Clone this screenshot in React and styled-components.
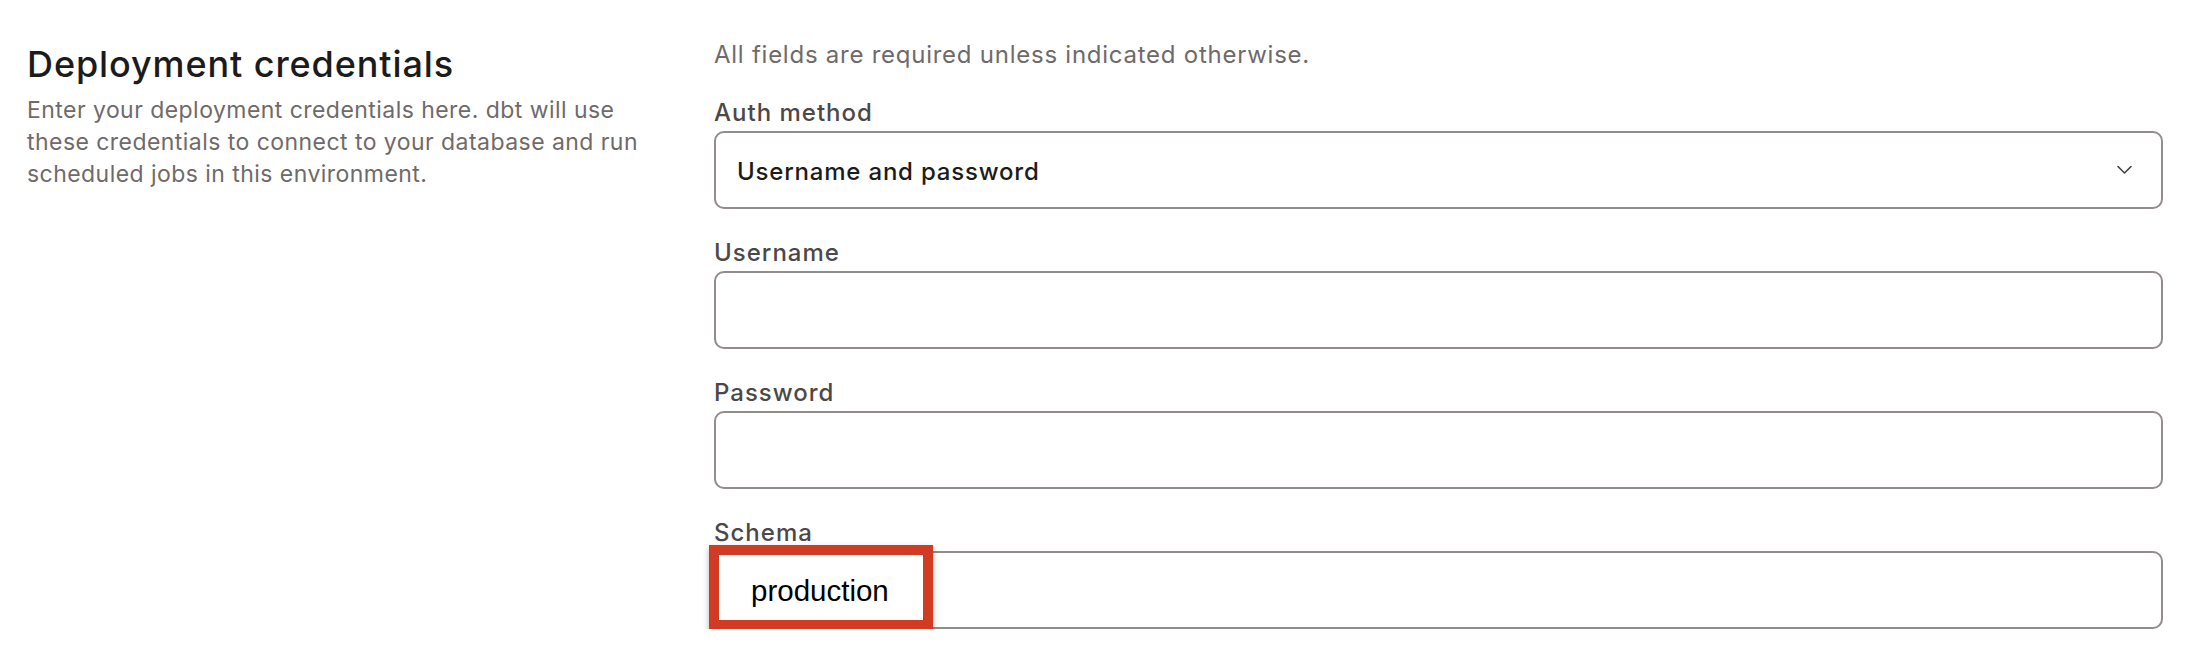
import React from "react";
import styled, { createGlobalStyle } from "styled-components";

const GlobalStyle = createGlobalStyle`
  html, body {
    margin: 0;
    padding: 0;
    background: #ffffff;
  }
  body {
    font-family: Inter, "Noto Sans", "Liberation Sans", sans-serif;
  }
`;

const Page = styled.div`
  display: flex;
  align-items: flex-start;
  padding: 40px 49px 0 27px;
`;

const Intro = styled.div`
  width: 650px;
  flex-shrink: 0;
  margin-right: 37px;
`;

const Title = styled.h2`
  margin: 2px 0 0;
  font-size: 36px;
  line-height: 44px;
  font-weight: 500;
  color: #1c1b1b;
  letter-spacing: 0.9px;
`;

const Description = styled.p`
  margin: 8px 0 0;
  font-size: 23px;
  line-height: 32px;
  font-weight: 400;
  color: #6f6a6a;
  letter-spacing: 0.45px;
`;

const Form = styled.div`
  flex: 1;
  display: flex;
  flex-direction: column;
  gap: 29px;
`;

const Note = styled.div`
  font-size: 24px;
  line-height: 29px;
  color: #6f6a6a;
  letter-spacing: 0.75px;
`;

const Field = styled.div`
  position: relative;
  display: flex;
  flex-direction: column;
  gap: 4px;
`;

const Label = styled.label`
  font-size: 24px;
  line-height: 29px;
  font-weight: 500;
  color: #4d4848;
  letter-spacing: 1px;
`;

const Box = styled.div`
  box-sizing: border-box;
  height: 78px;
  border: 2px solid #928d8b;
  border-radius: 10px;
  background: #ffffff;
  display: flex;
  align-items: center;
  justify-content: space-between;
  padding: 0 29px 0 ${({ $padLeft }) => $padLeft || 21}px;
`;

const SelectText = styled.span`
  font-size: 24px;
  font-weight: 500;
  color: #1d1b1b;
  letter-spacing: 0.8px;
  margin-top: 2px;
`;

const InputText = styled.span`
  font-family: "Liberation Sans", Arial, sans-serif;
  font-size: 29.5px;
  color: #000000;
  margin-top: 2px;
`;

const Highlight = styled.div`
  position: absolute;
  left: -5px;
  bottom: -1px;
  width: 224px;
  height: 85px;
  box-sizing: border-box;
  border: 10px solid #d13b23;
  box-shadow: 0 3px 6px rgba(0, 0, 0, 0.3);
  pointer-events: none;
`;

const Chevron = () => (
  <svg width="15" height="10" viewBox="0 0 15 10" fill="none">
    <path
      d="M1 1.5 L7.5 8 L14 1.5"
      stroke="#454141"
      strokeWidth="1.6"
      strokeLinecap="round"
      strokeLinejoin="round"
    />
  </svg>
);

const fields = [
  { label: "Username" },
  { label: "Password" },
  { label: "Schema", value: "production", highlight: true },
];

export default function App() {
  return (
    <>
      <GlobalStyle />
      <Page>
        <Intro>
          <Title>Deployment credentials</Title>
          <Description>
            Enter your deployment credentials here. dbt will use these
            credentials to connect to your database and run scheduled jobs in
            this environment.
          </Description>
        </Intro>
        <Form>
          <Note>All fields are required unless indicated otherwise.</Note>
          <Field>
            <Label>Auth method</Label>
            <Box>
              <SelectText>Username and password</SelectText>
              <Chevron />
            </Box>
          </Field>
          {fields.map((f) => (
            <Field key={f.label}>
              <Label>{f.label}</Label>
              <Box $padLeft={35}>
                {f.value && <InputText>{f.value}</InputText>}
              </Box>
              {f.highlight && <Highlight />}
            </Field>
          ))}
        </Form>
      </Page>
    </>
  );
}
